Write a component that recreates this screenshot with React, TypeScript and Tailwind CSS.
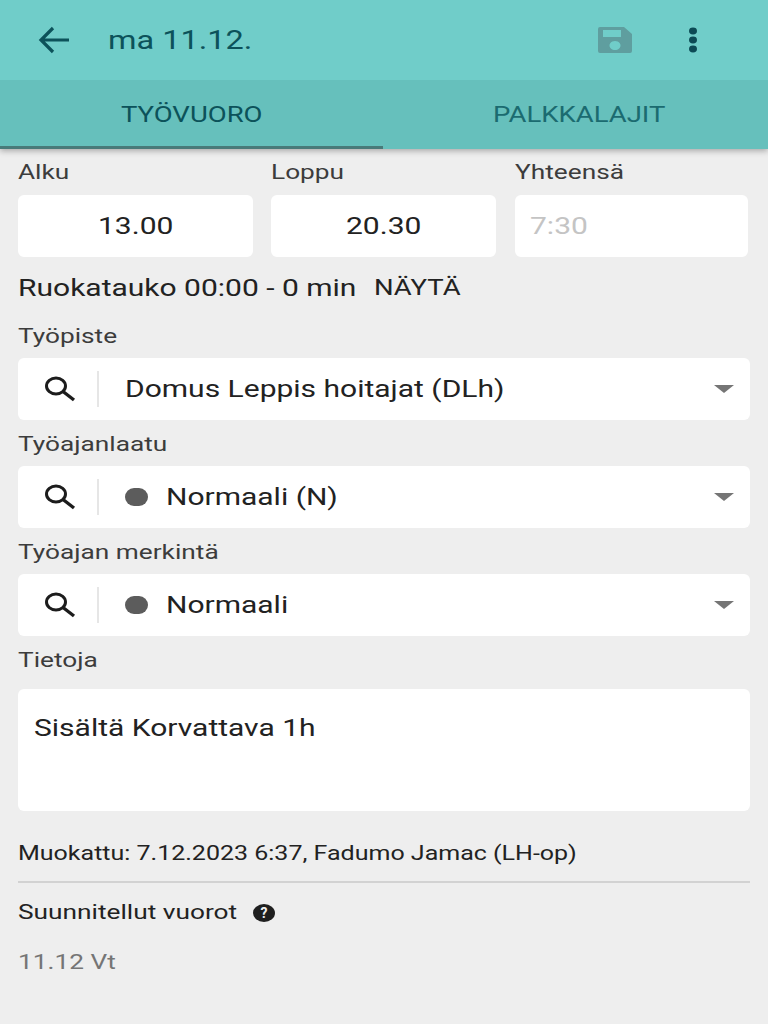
import React from 'react';

const font = { fontFamily: 'Roboto, "Liberation Sans", sans-serif' };

const Wide: React.FC<{ className?: string; children: React.ReactNode }> = ({ className = '', children }) => (
  <span className={`inline-block origin-left scale-x-[1.25] whitespace-nowrap ${className}`}>{children}</span>
);

const Label: React.FC<{ children: React.ReactNode }> = ({ children }) => (
  <div className="h-[31px] text-[21px] leading-[31px] text-[#3c3c3c]">
    <Wide>{children}</Wide>
  </div>
);

const SearchIcon = () => (
  <svg width="36" height="36" viewBox="0 0 36 36" fill="none" stroke="#1c1c1c" strokeWidth="3">
    <ellipse cx="15" cy="15" rx="9.5" ry="8" />
    <path d="M22 20.5 L33 29" strokeWidth="3.4" />
  </svg>
);

const SelectBox: React.FC<{ text: string; dot?: boolean }> = ({ text, dot }) => (
  <div className="flex h-[62px] items-center rounded-md bg-white">
    <div className="ml-[23px] w-[56px]">
      <SearchIcon />
    </div>
    <div className="h-[36px] w-[2px] bg-[#e6e6e6]" />
    {dot && <div className="ml-[26px] h-[18px] w-[23px] rounded-full bg-[#5c5c5c]" />}
    <div className={`text-[24px] text-[#222] ${dot ? 'ml-[18px]' : 'ml-[26px]'} flex-1`}>
      <Wide>{text}</Wide>
    </div>
    <div className="mr-[16px] h-0 w-0 border-x-[10px] border-t-[8px] border-x-transparent border-t-[#757575]" />
  </div>
);

export default function App() {
  return (
    <div className="h-[1024px] w-[768px] overflow-hidden bg-[#eeeeee]" style={font}>
      <header className="relative shadow-[0_2px_6px_rgba(0,0,0,0.3)]">
        <div className="flex h-[80px] items-center bg-[#70cdc9] text-[#0c525a]">
          <svg className="ml-[38px]" width="32" height="28" viewBox="0 0 32 28" fill="none" stroke="#0c525a" strokeWidth="3.2">
            <path d="M31 14 H3 M15 2 L3 14 L15 26" />
          </svg>
          <div className="ml-[38px] flex-1 text-[26px]">
            <Wide>ma 11.12.</Wide>
          </div>
          <svg className="mr-[53px]" width="36" height="28" viewBox="0 0 36 28" fill="#5f9e9f">
            <path fillRule="evenodd" d="M3 1 H27 L35 8 V25 a2 2 0 0 1 -2 2 H3 a2 2 0 0 1 -2 -2 V3 a2 2 0 0 1 2 -2 Z M6 4 V11 H24 V4 Z M18 15 a5.5 4.5 0 1 0 0.01 0 Z" />
          </svg>
          <svg className="mr-[68px]" width="14" height="26" viewBox="0 0 14 26" fill="#0c4a55">
            <ellipse cx="7" cy="4" rx="4" ry="3.4" />
            <ellipse cx="7" cy="13" rx="4" ry="3.4" />
            <ellipse cx="7" cy="22" rx="4" ry="3.4" />
          </svg>
        </div>
        <div className="flex h-[69px] bg-[#66c0bc] text-[22px]">
          <div className="flex w-[383px] items-center justify-center border-b-[3px] border-[#487a79] pt-[2px] text-[#0c525a]">
            <Wide className="-translate-x-[14px]">TYÖVUORO</Wide>
          </div>
          <div className="flex flex-1 items-center justify-center pb-[1px] text-[#1b6b70]">
            <Wide className="-translate-x-[14px]">PALKKALAJIT</Wide>
          </div>
        </div>
      </header>

      <main className="px-[18px] pt-[8px]">
        <div className="flex gap-[18px]">
          <div className="w-[235px]">
            <Label>Alku</Label>
            <div className="mt-[7px] flex h-[62px] items-center justify-center rounded-md bg-white text-[24px] text-[#222]">
              <Wide className="-translate-x-[7px]">13.00</Wide>
            </div>
          </div>
          <div className="w-[225px]">
            <Label>Loppu</Label>
            <div className="mt-[7px] flex h-[62px] items-center justify-center rounded-md bg-white text-[24px] text-[#222]">
              <Wide className="-translate-x-[7px]">20.30</Wide>
            </div>
          </div>
          <div className="w-[234px] pl-[1px]">
            <Label>Yhteensä</Label>
            <div className="mt-[7px] flex h-[62px] items-center rounded-md bg-white pl-[15px] text-[24px] text-[#c4c4c4]">
              <Wide>7:30</Wide>
            </div>
          </div>
        </div>

        <div className="mt-[12px] flex h-[38px] items-center text-[#222]">
          <div className="w-[356px] text-[24px]">
            <Wide>Ruokatauko 00:00 - 0 min</Wide>
          </div>
          <div className="text-[22px] -translate-y-[1px]">
            <Wide>NÄYTÄ</Wide>
          </div>
        </div>

        <div className="mt-[14px]">
          <Label>Työpiste</Label>
        </div>
        <div className="mt-[6px]">
          <SelectBox text="Domus Leppis hoitajat (DLh)" />
        </div>
        <div className="mt-[9px]">
          <Label>Työajanlaatu</Label>
        </div>
        <div className="mt-[6px]">
          <SelectBox dot text="Normaali (N)" />
        </div>
        <div className="mt-[9px]">
          <Label>Työajan merkintä</Label>
        </div>
        <div className="mt-[6px]">
          <SelectBox dot text="Normaali" />
        </div>
        <div className="mt-[9px]">
          <Label>Tietoja</Label>
        </div>
        <div className="mt-[13px] h-[122px] rounded-md bg-white px-[16px] pt-[22px] text-[24px] leading-[34px] text-[#222]">
          <Wide>Sisältä Korvattava 1h</Wide>
        </div>

        <div className="mt-[29px] text-[20px] leading-[26px] text-[#222]">
          <Wide>Muokattu: 7.12.2023 6:37, Fadumo Jamac (LH-op)</Wide>
        </div>
        <div className="mt-[15px] h-[2px] bg-[#d2d2d2]" />
        <div className="mt-[16px] flex h-[28px] items-center text-[21px] text-[#222]">
          <Wide>Suunnitellut vuorot</Wide>
          <svg className="ml-[60px]" width="22" height="18" viewBox="0 0 22 18">
            <ellipse cx="11" cy="9" rx="11" ry="9" fill="#1f1f1f" />
            <text x="11" y="14" textAnchor="middle" fontSize="14" fontWeight="700" fill="#eee" fontFamily="Roboto, sans-serif">?</text>
          </svg>
        </div>
        <div className="mt-[21px] text-[21px] leading-[28px] text-[#757575]">
          <Wide>11.12 Vt</Wide>
        </div>
      </main>
    </div>
  );
}
